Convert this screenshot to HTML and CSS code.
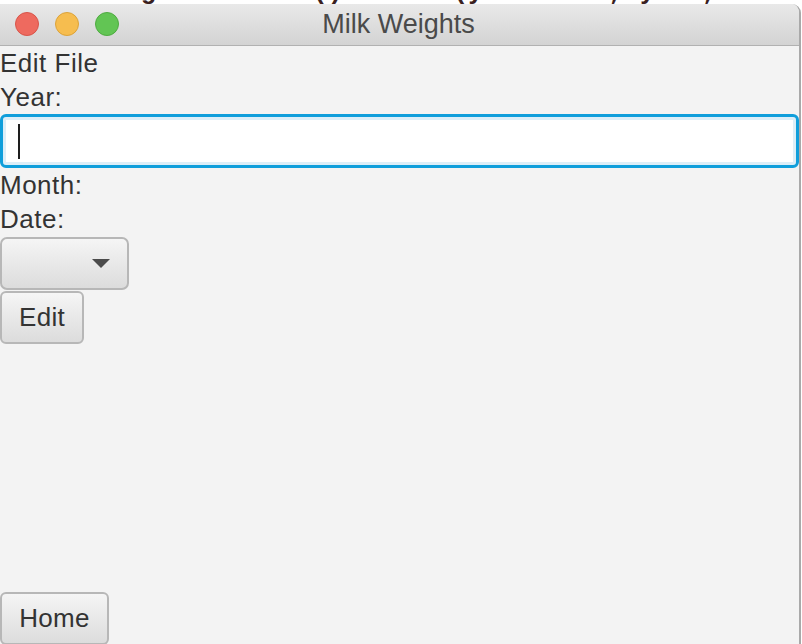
FILE: index.html
```html
<!DOCTYPE html>
<html>
<head>
<meta charset="utf-8">
<link rel="stylesheet" href="styles.css">
</head>
<body>
<div class="desktop">
  <div class="code">dateGrid.getChildren().addAll(yearLabel, year, monthLabel, month, dateLabel,</div>
  <div class="window">
    <div class="titlebar">
      <div class="lights">
        <span class="light red"></span>
        <span class="light yellow"></span>
        <span class="light green"></span>
      </div>
      <div class="title">Milk Weights</div>
    </div>
    <div class="content">
      <div class="label">Edit File</div>
      <div class="label">Year:</div>
      <div class="field"><span class="caret"></span></div>
      <div class="label">Month:</div>
      <div class="label">Date:</div>
      <div class="combo"><span class="arrow"></span></div>
      <div class="button edit">Edit</div>
      <div class="button home">Home</div>
    </div>
  </div>
</div>
</body>
</html>
```

FILE: styles.css
```css
html, body {
  margin: 0;
  padding: 0;
  background: #ffffff;
}
.desktop {
  position: relative;
  width: 802px;
  height: 644px;
  overflow: hidden;
  font-family: "Liberation Sans", Arial, sans-serif;
}
.code {
  position: absolute;
  left: 0;
  top: -21px;
  line-height: 26px;
  white-space: nowrap;
  font-family: "Liberation Mono", monospace;
  font-weight: bold;
  font-size: 26px;
  color: #3a1f1f;
}
.window {
  position: absolute;
  left: 0;
  top: 4px;
  width: 799px;
  height: 640px;
  border-right: 2px solid #a9a9a9;
  border-top-right-radius: 9px;
  overflow: hidden;
  display: flex;
  flex-direction: column;
  background: #f3f3f3;
}
.titlebar {
  height: 41px;
  flex: none;
  display: flex;
  align-items: center;
  justify-content: center;
  position: relative;
  background: linear-gradient(#e9e9e9, #d3d3d3);
  border-bottom: 1px solid #b1b1b1;
}
.lights {
  position: absolute;
  left: 15px;
  top: 8px;
  display: flex;
  gap: 16px;
}
.light {
  width: 24px;
  height: 24px;
  border-radius: 50%;
  box-sizing: border-box;
}
.red { background: #ee6a5f; border: 1px solid #d8554a; }
.yellow { background: #f6bd4f; border: 1px solid #dca33a; }
.green { background: #62c554; border: 1px solid #4fab41; }
.title {
  font-size: 27px;
  color: #4a4a4a;
  margin-left: -2px;
}
.content {
  flex: 1;
  display: flex;
  flex-direction: column;
  align-items: flex-start;
  background: #f3f3f3;
  color: #333333;
}
.label {
  font-size: 26px;
  line-height: 34px;
  height: 34px;
  letter-spacing: 0.5px;
}
.field {
  width: 799px;
  height: 54px;
  box-sizing: border-box;
  border: 3px solid #0f9edb;
  border-radius: 6px;
  background: #ffffff;
  box-shadow: inset 0 0 0 3px #dceef8;
  display: flex;
  align-items: center;
  padding-left: 15px;
}
.caret {
  width: 2px;
  height: 35px;
  background: #1e1e1e;
}
.combo {
  width: 129px;
  height: 53px;
  margin-top: 1px;
  box-sizing: border-box;
  border: 2px solid #b7b7b7;
  border-radius: 7px;
  background: linear-gradient(#f5f5f5, #dcdcdc);
  display: flex;
  align-items: center;
  justify-content: flex-end;
  padding-right: 17px;
}
.arrow {
  width: 0;
  height: 0;
  border-left: 9px solid transparent;
  border-right: 9px solid transparent;
  border-top: 9px solid #4b4b4b;
}
.button {
  box-sizing: border-box;
  height: 53px;
  border: 2px solid #b7b7b7;
  border-radius: 6px;
  background: linear-gradient(#f5f5f5, #dcdcdc);
  font-size: 26px;
  letter-spacing: 0.3px;
  color: #333333;
  display: flex;
  align-items: center;
  justify-content: center;
}
.edit {
  width: 84px;
  margin-top: 1px;
}
.home {
  width: 109px;
  margin-top: auto;
  margin-bottom: -1px;
}
```
